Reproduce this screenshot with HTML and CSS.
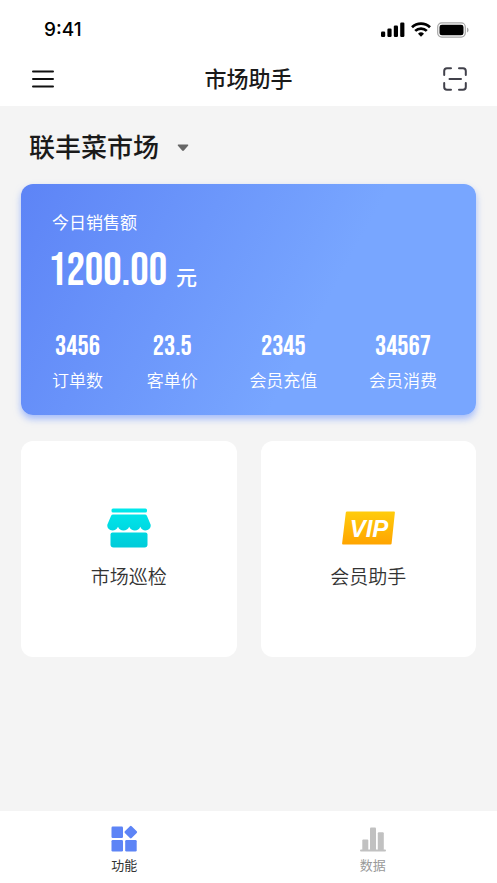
FILE: index.html
```html
<!DOCTYPE html>
<html lang="zh-CN">
<head>
<meta charset="utf-8">
<meta name="viewport" content="width=device-width, initial-scale=1">
<title>市场助手</title>
<link rel="stylesheet" href="styles.css">
</head>
<body>
<div class="app">
  <header class="top">
    <div class="status">
      <time class="clock">9:41</time>
      <div class="indicators">
        <svg width="24" height="16" viewBox="0 0 24 16" aria-hidden="true">
          <rect x="0" y="9.500" width="4.200" height="5.500" rx="1.200"/><rect x="6.400" y="6.500" width="4.200" height="8.500" rx="1.200"/><rect x="12.800" y="3.500" width="4.200" height="11.500" rx="1.200"/><rect x="19.200" y="0.500" width="4.200" height="14.500" rx="1.200"/>
        </svg>
        <svg width="20" height="16" viewBox="0 0 20 16" fill="none" stroke="#000" stroke-width="2.700" aria-hidden="true">
          <path d="M1 5.300A13 13 0 0 1 19 5.300"/><path d="M4.200 8.900A8.300 8.300 0 0 1 15.800 8.900"/><path d="M7 11.700A4.300 4.300 0 0 1 13 11.700L10 14.800Z" fill="#000" stroke="none"/>
        </svg>
        <svg width="32" height="16" viewBox="0 0 32 16" aria-hidden="true">
          <rect x="0.700" y="0.900" width="27.600" height="14.200" rx="4" fill="none" stroke="#a6a6a6" stroke-width="1.200"/><rect x="2.500" y="2.700" width="24" height="10.600" rx="2.400"/><path d="M30 5.500Q31.600 6.400 31.600 8T30 10.500Z" fill="#a6a6a6"/>
        </svg>
      </div>
    </div>
    <div class="navbar">
      <button class="icon-button" type="button" aria-label="菜单">
        <svg width="22" height="18" viewBox="0 0 22 18" fill="none" stroke="#111" stroke-width="2" stroke-linecap="round" aria-hidden="true"><path d="M1 1.500H21M1 9H21M1 16.500H21"/></svg>
      </button>
      <h1 class="title">市场助手</h1>
      <button class="icon-button" type="button" aria-label="扫一扫">
        <svg width="24" height="24" viewBox="0 0 24 24" fill="none" stroke="#41414b" stroke-width="2" stroke-linecap="round" aria-hidden="true"><path d="M8 1.200H4Q1.200 1.200 1.200 4V8M16 1.200H20Q22.800 1.200 22.800 4V8M1.200 16V20Q1.200 22.800 4 22.800H8M22.800 16V20Q22.800 22.800 20 22.800H16M6.500 12H18"/></svg>
      </button>
    </div>
  </header>

  <main class="content">
    <div class="market">
      <select class="market-select" aria-label="选择市场">
        <option>联丰菜市场</option>
      </select>
      <svg class="caret" width="12" height="8" viewBox="0 0 12 8" aria-hidden="true"><path d="M1.200 .5H10.800Q11.800 .8 11 1.800L6.900 6.600Q6 7.500 5.100 6.600L1 1.800Q.2.8 1.200.5Z" fill="#666"/></svg>
    </div>

    <section class="sales">
      <h2 class="sales-label">今日销售额</h2>
      <p class="amount"><strong class="amount-value">1200.00</strong><span class="amount-unit">元</span></p>
      <dl class="stats">
        <div class="stat"><dt>订单数</dt><dd>3456</dd></div>
        <div class="stat"><dt>客单价</dt><dd>23.5</dd></div>
        <div class="stat"><dt>会员充值</dt><dd>2345</dd></div>
        <div class="stat"><dt>会员消费</dt><dd>34567</dd></div>
      </dl>
    </section>

    <div class="tiles">
      <a class="tile" href="#inspect">
        <svg width="44" height="40" viewBox="0 0 44 40" aria-hidden="true">
          <defs><linearGradient id="cyan" x1="0" y1="0" x2="0" y2="40" gradientUnits="userSpaceOnUse"><stop stop-color="#00e9ec"/><stop offset="1" stop-color="#00cbd9"/></linearGradient></defs>
          <g fill="url(#cyan)">
            <rect x="4.500" y="0.500" width="35.500" height="4" rx="1.500"/>
            <path d="M6 6.500H38Q39.300 6.500 39.900 7.800L43.600 16.500C44.300 19.800 41.800 22.500 38.500 22.500Q35 22.500 33.300 18.700Q31.800 22.500 27.900 22.500Q24 22.500 22.200 18.700Q20.400 22.500 16.500 22.500Q12.600 22.500 11 18.700Q9.200 22.500 5.500 22.500C2.200 22.500-.300 19.800.400 16.500L4.100 7.800Q4.700 6.500 6 6.500Z"/>
            <path d="M5.500 24.500H38.500Q40.500 24.500 40.500 26.500V36.500Q40.500 39.500 37.500 39.500H6.500Q3.500 39.500 3.500 36.500V26.500Q3.500 24.500 5.500 24.500Z"/>
          </g>
        </svg>
        <span>市场巡检</span>
      </a>
      <a class="tile" href="#member">
        <span class="vip"><svg width="53" height="34" viewBox="0 0 53 34" aria-hidden="true">
          <defs><linearGradient id="gold" x1="0" y1="0" x2="0" y2="1"><stop stop-color="#ffcc0d"/><stop offset="1" stop-color="#ffa400"/></linearGradient></defs>
          <path d="M5 .5H52Q53 .5 52.900 1.500L49.600 32.500Q49.500 33.500 48.500 33.500H1Q0 33.500.100 32.500L3.800 1.500Q4 .5 5 .5Z" fill="url(#gold)"/>
          <text x="27" y="26" text-anchor="middle" class="vip-text">VIP</text>
        </svg></span>
        <span>会员助手</span>
      </a>
    </div>
  </main>

  <nav class="tabs">
    <a class="tab tab-active" href="#features">
      <svg width="28" height="28" viewBox="0 0 28 28" fill="#5d84f6" aria-hidden="true">
        <rect x="1.500" y="2.500" width="11.500" height="11.500" rx="1.200"/><rect x="1.500" y="16" width="11.500" height="11.500" rx="1.200"/><rect x="15.200" y="16" width="11.500" height="11.500" rx="1.200"/><rect x="16" y="3.300" width="9.600" height="9.600" rx="1.200" transform="rotate(45 20.800 8.100)"/>
      </svg>
      <span>功能</span>
    </a>
    <a class="tab" href="#data">
      <svg width="28" height="28" viewBox="0 0 28 28" fill="#c1c1c1" aria-hidden="true">
        <rect x="1" y="25.500" width="26" height="2" rx="1"/><rect x="3.300" y="15.500" width="6" height="11" rx="1"/><rect x="11" y="3.500" width="6" height="23" rx="1"/><rect x="18.800" y="8.200" width="6" height="18" rx="1"/>
      </svg>
      <span>数据</span>
    </a>
  </nav>
</div>
</body>
</html>
```
FILE: styles.css
```css
* {
  box-sizing: border-box;
  margin: 0;
}

body {
  background: #f4f4f4;
  color: #1a1a1a;
  font-family: Inter, "Noto Sans CJK SC", sans-serif;
}

a {
  color: inherit;
  text-decoration: none;
}

svg {
  display: block;
}

.app {
  display: flex;
  flex-direction: column;
  min-height: 100vh;
}

.top {
  background: #fff;
}

.status {
  display: flex;
  align-items: center;
  justify-content: space-between;
  height: 52px;
  padding: 8px 28px 0 44px;
}

.clock {
  color: #000;
  font-size: 19px;
  font-weight: 500;
  line-height: 24px;
}

.indicators {
  display: flex;
  gap: 6px;
}

.navbar {
  display: flex;
  align-items: center;
  justify-content: space-between;
  height: 54px;
  padding: 0 30px 0 32px;
}

.icon-button {
  display: grid;
  place-items: center;
  padding: 0;
  border: 0;
  background: none;
}

.title {
  font-size: 22px;
  font-weight: 500;
  line-height: 32px;
}

.content {
  flex: 1;
  padding: 22px 21px;
}

.market {
  display: flex;
  align-items: center;
  gap: 17px;
  padding: 0 8px;
}

.market-select {
  appearance: none;
  height: 40px;
  padding: 0;
  border: 0;
  background: none;
  color: inherit;
  font: 500 26px/40px Inter, "Noto Sans CJK SC", sans-serif;
}

.caret {
  pointer-events: none;
}

.sales {
  margin-top: 16px;
  padding: 27px 39px 21px 31px;
  border-radius: 12px;
  background: linear-gradient(118deg, #5d84f6 0%, #78a6ff 64%, #78a6ff 100%);
  box-shadow: 0 4px 7px rgba(110, 150, 255, 0.6);
  color: #fff;
}

.sales-label {
  font-size: 17px;
  font-weight: 400;
  line-height: 24px;
}

.amount {
  display: flex;
  align-items: baseline;
  gap: 9px;
  margin-left: -4px;
  line-height: 74px;
}

.amount-value {
  font-family: "Bebas Neue", "Liberation Sans Narrow", "Liberation Sans", sans-serif;
  font-size: 46px;
  font-weight: 400;
}

.amount-unit {
  font-size: 21px;
  font-weight: 500;
}

.stats {
  display: grid;
  grid-template-columns: 95fr 103fr 120fr 67fr;
  margin-top: 12px;
}

.stat {
  display: flex;
  flex-direction: column-reverse;
  align-items: center;
  justify-self: start;
  gap: 2px;
}

.stat dt {
  font-size: 17px;
  font-weight: 350;
  line-height: 25px;
  white-space: nowrap;
}

.stat dd {
  font-family: "Bebas Neue", "Liberation Sans Narrow", "Liberation Sans", sans-serif;
  font-size: 28px;
  font-weight: 300;
  line-height: 40px;
}

.tiles {
  display: grid;
  grid-template-columns: 1fr 1fr;
  gap: 24px;
  margin-top: 26px;
}

.tile {
  display: flex;
  flex-direction: column;
  align-items: center;
  justify-content: center;
  gap: 16px;
  aspect-ratio: 1;
  padding-top: 2px;
  border-radius: 12px;
  background: #fff;
  color: #333;
  font-size: 19px;
  font-weight: 350;
  line-height: 28px;
}

.vip {
  display: grid;
  place-items: center;
  height: 40px;
}

.vip-text {
  fill: #fff;
  font: italic 700 24px "Liberation Sans", sans-serif;
}

.tabs {
  display: flex;
  height: 72px;
  background: #fff;
}

.tab {
  display: flex;
  flex: 1;
  flex-direction: column;
  align-items: center;
  gap: 3px;
  padding-top: 13px;
  color: #999;
  font-size: 13px;
  line-height: 20px;
}

.tab-active {
  color: #333;
}
```
